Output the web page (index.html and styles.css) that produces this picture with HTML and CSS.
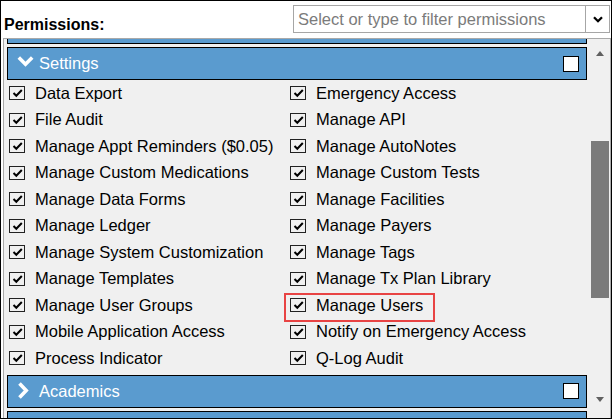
FILE: index.html
```html
<!DOCTYPE html>
<html>
<head>
<meta charset="utf-8">
<link rel="stylesheet" href="styles.css">
</head>
<body>
<div class="frame">
  <div class="top">
    <span class="title">Permissions:</span>
    <div class="select">
      <span class="ph">Select or type to filter permissions</span>
      <span class="caret"><svg width="10" height="7" viewBox="0 0 10 7"><path d="M1 1.2 L5 5.2 L9 1.2" fill="none" stroke="#000" stroke-width="2.3"/></svg></span>
    </div>
  </div>
  <div class="panel">
    <div class="list">
      <div class="stub"></div>
      <div class="section">
        <div class="sec-head">
          <svg class="chev" width="22" height="18" viewBox="0 0 22 18"><path d="M1.8 2.5 L8.5 9.2 L15.2 2.5" fill="none" stroke="#fff" stroke-width="3.6"/></svg>
          <span class="sec-name">Settings</span>
          <span class="hbox"></span>
        </div>
        <div class="grid">
          <div class="cell"><span class="cb"><svg width="13" height="12" viewBox="0 0 13 12"><path d="M2.5 6 L5.3 8.8 L10.8 3" fill="none" stroke="#000" stroke-width="2"/></svg></span>Data Export</div>
          <div class="cell"><span class="cb"><svg width="13" height="12" viewBox="0 0 13 12"><path d="M2.5 6 L5.3 8.8 L10.8 3" fill="none" stroke="#000" stroke-width="2"/></svg></span>Emergency Access</div>
          <div class="cell"><span class="cb"><svg width="13" height="12" viewBox="0 0 13 12"><path d="M2.5 6 L5.3 8.8 L10.8 3" fill="none" stroke="#000" stroke-width="2"/></svg></span>File Audit</div>
          <div class="cell"><span class="cb"><svg width="13" height="12" viewBox="0 0 13 12"><path d="M2.5 6 L5.3 8.8 L10.8 3" fill="none" stroke="#000" stroke-width="2"/></svg></span>Manage API</div>
          <div class="cell"><span class="cb"><svg width="13" height="12" viewBox="0 0 13 12"><path d="M2.5 6 L5.3 8.8 L10.8 3" fill="none" stroke="#000" stroke-width="2"/></svg></span>Manage Appt Reminders ($0.05)</div>
          <div class="cell"><span class="cb"><svg width="13" height="12" viewBox="0 0 13 12"><path d="M2.5 6 L5.3 8.8 L10.8 3" fill="none" stroke="#000" stroke-width="2"/></svg></span>Manage AutoNotes</div>
          <div class="cell"><span class="cb"><svg width="13" height="12" viewBox="0 0 13 12"><path d="M2.5 6 L5.3 8.8 L10.8 3" fill="none" stroke="#000" stroke-width="2"/></svg></span>Manage Custom Medications</div>
          <div class="cell"><span class="cb"><svg width="13" height="12" viewBox="0 0 13 12"><path d="M2.5 6 L5.3 8.8 L10.8 3" fill="none" stroke="#000" stroke-width="2"/></svg></span>Manage Custom Tests</div>
          <div class="cell"><span class="cb"><svg width="13" height="12" viewBox="0 0 13 12"><path d="M2.5 6 L5.3 8.8 L10.8 3" fill="none" stroke="#000" stroke-width="2"/></svg></span>Manage Data Forms</div>
          <div class="cell"><span class="cb"><svg width="13" height="12" viewBox="0 0 13 12"><path d="M2.5 6 L5.3 8.8 L10.8 3" fill="none" stroke="#000" stroke-width="2"/></svg></span>Manage Facilities</div>
          <div class="cell"><span class="cb"><svg width="13" height="12" viewBox="0 0 13 12"><path d="M2.5 6 L5.3 8.8 L10.8 3" fill="none" stroke="#000" stroke-width="2"/></svg></span>Manage Ledger</div>
          <div class="cell"><span class="cb"><svg width="13" height="12" viewBox="0 0 13 12"><path d="M2.5 6 L5.3 8.8 L10.8 3" fill="none" stroke="#000" stroke-width="2"/></svg></span>Manage Payers</div>
          <div class="cell"><span class="cb"><svg width="13" height="12" viewBox="0 0 13 12"><path d="M2.5 6 L5.3 8.8 L10.8 3" fill="none" stroke="#000" stroke-width="2"/></svg></span>Manage System Customization</div>
          <div class="cell"><span class="cb"><svg width="13" height="12" viewBox="0 0 13 12"><path d="M2.5 6 L5.3 8.8 L10.8 3" fill="none" stroke="#000" stroke-width="2"/></svg></span>Manage Tags</div>
          <div class="cell"><span class="cb"><svg width="13" height="12" viewBox="0 0 13 12"><path d="M2.5 6 L5.3 8.8 L10.8 3" fill="none" stroke="#000" stroke-width="2"/></svg></span>Manage Templates</div>
          <div class="cell"><span class="cb"><svg width="13" height="12" viewBox="0 0 13 12"><path d="M2.5 6 L5.3 8.8 L10.8 3" fill="none" stroke="#000" stroke-width="2"/></svg></span>Manage Tx Plan Library</div>
          <div class="cell"><span class="cb"><svg width="13" height="12" viewBox="0 0 13 12"><path d="M2.5 6 L5.3 8.8 L10.8 3" fill="none" stroke="#000" stroke-width="2"/></svg></span>Manage User Groups</div>
          <div class="cell"><span class="highlight"></span><span class="cb"><svg width="13" height="12" viewBox="0 0 13 12"><path d="M2.5 6 L5.3 8.8 L10.8 3" fill="none" stroke="#000" stroke-width="2"/></svg></span>Manage Users</div>
          <div class="cell"><span class="cb"><svg width="13" height="12" viewBox="0 0 13 12"><path d="M2.5 6 L5.3 8.8 L10.8 3" fill="none" stroke="#000" stroke-width="2"/></svg></span>Mobile Application Access</div>
          <div class="cell"><span class="cb"><svg width="13" height="12" viewBox="0 0 13 12"><path d="M2.5 6 L5.3 8.8 L10.8 3" fill="none" stroke="#000" stroke-width="2"/></svg></span>Notify on Emergency Access</div>
          <div class="cell"><span class="cb"><svg width="13" height="12" viewBox="0 0 13 12"><path d="M2.5 6 L5.3 8.8 L10.8 3" fill="none" stroke="#000" stroke-width="2"/></svg></span>Process Indicator</div>
          <div class="cell"><span class="cb"><svg width="13" height="12" viewBox="0 0 13 12"><path d="M2.5 6 L5.3 8.8 L10.8 3" fill="none" stroke="#000" stroke-width="2"/></svg></span>Q-Log Audit</div>
        </div>
      </div>
      <div class="section">
        <div class="sec-head">
          <svg class="chev" width="22" height="18" viewBox="0 0 22 18"><path d="M2.5 1.5 L9.2 8.5 L2.5 15.5" fill="none" stroke="#fff" stroke-width="3.6"/></svg>
          <span class="sec-name">Academics</span>
          <span class="hbox"></span>
        </div>
      </div>
      <div class="section">
        <div class="sec-head">
          <svg class="chev" width="22" height="18" viewBox="0 0 22 18"><path d="M2.5 1.5 L9.2 8.5 L2.5 15.5" fill="none" stroke="#fff" stroke-width="3.6"/></svg>
          <span class="sec-name"></span>
          <span class="hbox"></span>
        </div>
      </div>
    </div>
    <div class="scrollbar">
      <div class="sb-btn sb-up"><span class="tri-up"></span></div>
      <div class="track"><div class="thumb"></div></div>
      <div class="sb-btn sb-down"><span class="tri-down"></span></div>
    </div>
  </div>
</div>
</body>
</html>
```

FILE: styles.css
```css
html, body {
  margin: 0;
  padding: 0;
  background: #fff;
}
body {
  font-family: "Liberation Sans", Arial, sans-serif;
  font-size: 16.5px;
  color: #000;
}
.frame {
  box-sizing: border-box;
  width: 612px;
  height: 419px;
  border: 1px solid #000;
  display: flex;
  flex-direction: column;
  overflow: hidden;
}
.top {
  height: 37px;
  flex: none;
  display: flex;
  align-items: flex-start;
  justify-content: space-between;
  padding: 0 1px 0 3px;
}
.title {
  font-weight: bold;
  font-size: 16px;
  margin-top: 15px;
}
.select {
  box-sizing: border-box;
  width: 317px;
  height: 28px;
  margin-top: 4px;
  border: 1px solid #a6a6a6;
  display: flex;
  align-items: center;
  background: #fff;
}
.ph {
  flex: 1;
  padding-left: 4px;
  color: #7b7b7b;
  font-size: 16.5px;
  white-space: nowrap;
}
.caret {
  width: 23px;
  height: 26px;
  border-left: 1px solid #a6a6a6;
  display: flex;
  align-items: center;
  justify-content: center;
}
.caret svg { display: block; margin-top: 1px; }
.panel {
  flex: 1;
  margin-left: 2px;
  border: 1px solid #a9a9a9;
  border-bottom: none;
  background: #f0f0f0;
  display: flex;
  min-height: 0;
}
.list {
  width: 580px;
  padding: 0 3px;
  overflow: hidden;
}
.stub {
  height: 4px;
  background: #5a9bcf;
  border: 1px solid #000;
  border-top: none;
  margin-bottom: 3px;
}
.section {
  margin-bottom: 3px;
}
.sec-head {
  box-sizing: border-box;
  height: 33px;
  background: #5a9bcf;
  border: 1px solid #000;
  display: flex;
  align-items: center;
  padding-left: 9px;
  padding-right: 7px;
  color: #fff;
}
.chev { display: block; flex: none; }
.sec-name {
  flex: 1;
  font-size: 16.5px;
  color: #fff;
}
.hbox {
  box-sizing: border-box;
  width: 16px;
  height: 16px;
  background: #fff;
  border: 1px solid #000;
  flex: none;
}
.grid {
  display: grid;
  grid-template-columns: 281px 281px;
  grid-auto-rows: 26.5px;
  padding-left: 2px;
}
.cell {
  position: relative;
  display: flex;
  align-items: center;
  white-space: nowrap;
  font-size: 16.5px;
}
.cb {
  box-sizing: border-box;
  width: 16px;
  height: 14px;
  border: 1px solid #222;
  margin-right: 10px;
  flex: none;
  display: flex;
  align-items: center;
  justify-content: center;
}
.cb svg { display: block; }
.highlight {
  position: absolute;
  left: -6px;
  top: 1px;
  width: 151px;
  height: 29px;
  box-sizing: border-box;
  border: 2px solid #e84343;
}
.scrollbar {
  width: 20px;
  display: flex;
  flex-direction: column;
}
.sb-btn {
  flex: none;
  display: flex;
  justify-content: center;
}
.sb-up {
  height: 17px;
  align-items: flex-end;
}
.sb-down {
  height: 21px;
  align-items: flex-start;
  padding-top: 2px;
}
.tri-up {
  width: 0;
  height: 0;
  border-left: 4.5px solid transparent;
  border-right: 4.5px solid transparent;
  border-bottom: 5px solid #606060;
}
.tri-down {
  width: 0;
  height: 0;
  border-left: 4.5px solid transparent;
  border-right: 4.5px solid transparent;
  border-top: 5px solid #606060;
}
.track {
  flex: 1;
  padding: 85px 1px 0 1px;
}
.thumb {
  height: 157px;
  background: #7b7b7b;
}
```
